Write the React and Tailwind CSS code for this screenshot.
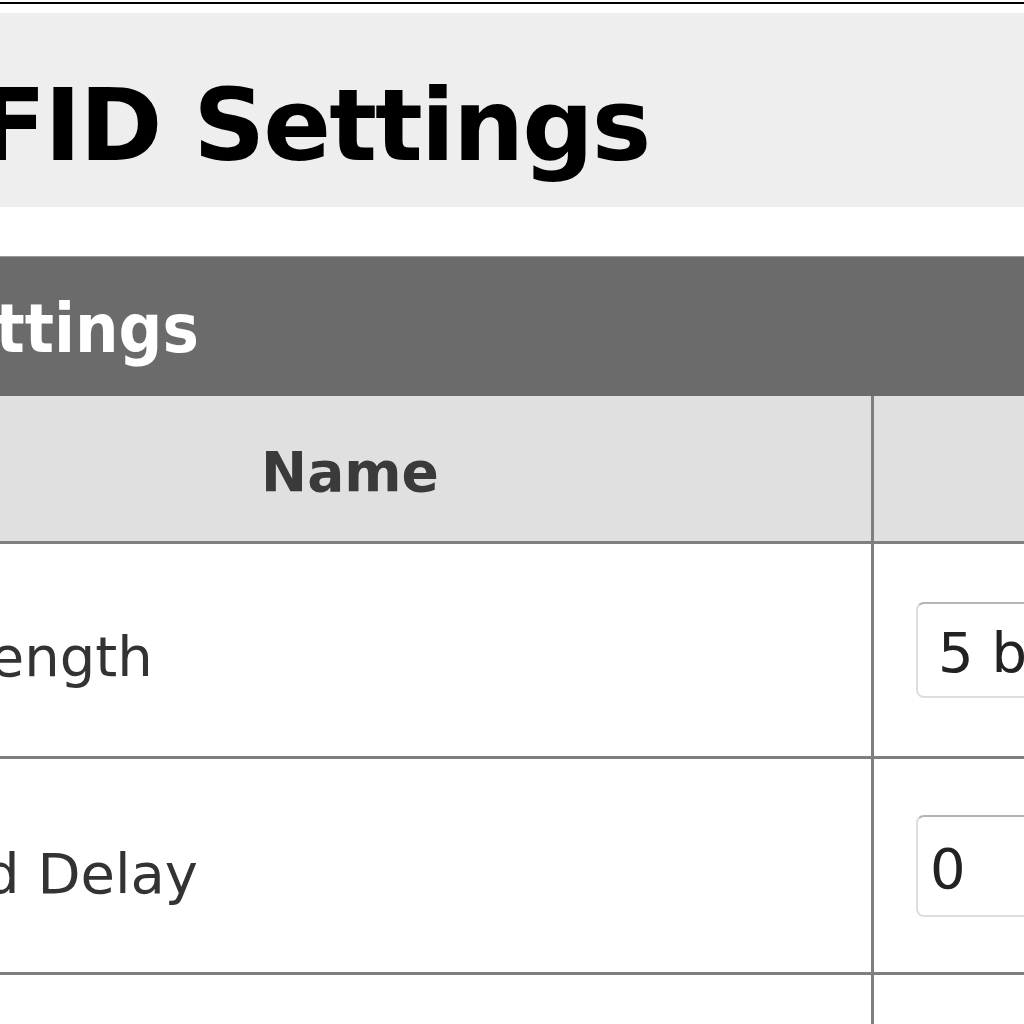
import React from "react";

const font = { fontFamily: '"DejaVu Sans", Verdana, sans-serif' };

export default function App() {
  return (
    <div className="w-[1024px] h-[1024px] overflow-hidden bg-white" style={font}>
      <div className="h-[2px] bg-white" />
      <div className="h-[2px] bg-black" />
      <div className="h-[9px] bg-white" />
      <div className="h-[194px] bg-[#eeeeee] overflow-hidden flex items-center">
        <h1 className="ml-[-97px] whitespace-nowrap text-[100px] font-bold tracking-[-2px] text-black leading-none pt-[32px]">
          RFID Settings
        </h1>
      </div>
      <div className="h-[49px] bg-white" />
      <div className="h-[140px] bg-[#6b6b6b] overflow-hidden flex items-center border-t border-[#9a9a9a]">
        <h2 className="ml-[-90px] whitespace-nowrap text-[68px] font-bold font-stretch-condensed text-white leading-none pt-[4px]">
          Settings
        </h2>
      </div>
      <div className="ml-[-171px] w-[1400px]">
        <div className="flex h-[148px] bg-[#e0e0e0] border-b-[3px] border-[#7f7f7f]">
          <div className="w-[1045px] shrink-0 flex items-center justify-center border-r-[3px] border-[#7f7f7f]">
            <span className="text-[55px] font-bold text-[#3a3a3a] pt-[8px]">Name</span>
          </div>
          <div className="flex-1" />
        </div>
        <div className="flex h-[215px] border-b-[3px] border-[#7f7f7f]">
          <div className="w-[1045px] shrink-0 flex items-center pl-[18px] border-r-[3px] border-[#7f7f7f]">
            <span className="text-[56px] text-[#333333] whitespace-nowrap pt-[14px]">Tag Length</span>
          </div>
          <div className="flex-1 flex items-center pl-[42px]">
            <div className="w-[300px] h-[96px] shrink-0 rounded-[8px] border-2 border-[#dddddd] border-t-[#b5b5b5] flex items-center pl-[20px] bg-white">
              <span className="text-[56px] text-[#222222] whitespace-nowrap pt-[6px]">5 bytes</span>
            </div>
          </div>
        </div>
        <div className="flex h-[216px] border-b-[3px] border-[#7f7f7f]">
          <div className="w-[1045px] shrink-0 flex items-center pl-[18px] border-r-[3px] border-[#7f7f7f]">
            <span className="text-[56px] text-[#333333] whitespace-nowrap pt-[16px]">Timed Delay</span>
          </div>
          <div className="flex-1 flex items-center pl-[42px]">
            <div className="w-[300px] h-[102px] shrink-0 rounded-[8px] border-2 border-[#dddddd] border-t-[#b5b5b5] flex items-center pl-[12px] bg-white">
              <span className="text-[56px] text-[#222222] whitespace-nowrap pt-[6px]">0</span>
            </div>
          </div>
        </div>
        <div className="flex h-[200px]">
          <div className="w-[1045px] shrink-0 border-r-[3px] border-[#7f7f7f]" />
          <div className="flex-1" />
        </div>
      </div>
    </div>
  );
}
